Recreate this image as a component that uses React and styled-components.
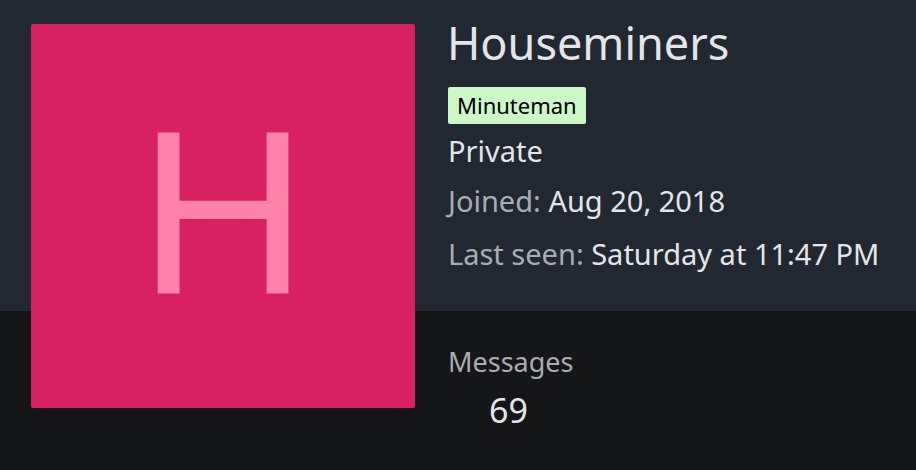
import React from 'react'
import styled, { createGlobalStyle } from 'styled-components'

const GlobalStyle = createGlobalStyle`
  html, body {
    margin: 0;
    padding: 0;
    background: #151618;
  }
  body {
    font-family: "Noto Sans", "Open Sans", sans-serif;
  }
`

const Page = styled.div`
  display: grid;
  grid-template-columns: 448px 1fr;
  grid-template-rows: 311px 159px;
  width: 916px;
  height: 470px;
  background: #151618;
`

const HeaderBand = styled.div`
  grid-row: 1;
  grid-column: 1 / -1;
  background: #222831;
`

const Avatar = styled.div`
  grid-row: 1 / 3;
  grid-column: 1;
  align-self: start;
  z-index: 1;
  margin: 24px 0 0 31px;
  width: 384px;
  height: 384px;
  border-radius: 2px;
  background: #d72161;
  color: #fe82aa;
  display: flex;
  align-items: center;
  justify-content: center;
  font-family: "Liberation Sans", Arial, sans-serif;
  font-size: 234px;
  line-height: 1;
  padding-bottom: 7px;
  box-sizing: border-box;
`

const Header = styled.div`
  grid-row: 1;
  grid-column: 2;
  z-index: 1;
  display: flex;
  flex-direction: column;
  align-items: flex-start;
  padding-top: 15px;
`

const Name = styled.h1`
  margin: 0 0 0 -1px;
  font-size: 45px;
  font-weight: 400;
  line-height: 56px;
  color: #e3e5e8;
`

const Badge = styled.span`
  margin-top: 16px;
  padding: 0 9px;
  font-size: 22px;
  line-height: 37px;
  color: #000;
  background: #ccf7c7;
  border-radius: 2px;
`

const Line = styled.div`
  margin-top: ${p => p.$gap}px;
  font-size: 29px;
  line-height: 36px;
  color: ${p => (p.$light ? '#e3e5e8' : '#a9adb3')};
`

const Value = styled.span`
  color: #e3e5e8;
`

const Stats = styled.div`
  grid-row: 2;
  grid-column: 2;
  padding-top: 34px;
`

const StatLabel = styled.div`
  font-size: 27px;
  line-height: 34px;
  color: #a9adb3;
`

const StatValue = styled.div`
  margin-top: 11px;
  padding-left: 41px;
  font-size: 34px;
  line-height: 40px;
  color: #e3e5e8;
`

export default function App() {
  return (
    <>
      <GlobalStyle />
      <Page>
        <HeaderBand />
        <Avatar>H</Avatar>
        <Header>
          <Name>Houseminers</Name>
          <Badge>Minuteman</Badge>
          <Line $light $gap={9}>Private</Line>
          <Line $gap={14}>
            Joined: <Value>Aug 20, 2018</Value>
          </Line>
          <Line $gap={17}>
            Last seen: <Value>Saturday at 11:47 PM</Value>
          </Line>
        </Header>
        <Stats>
          <StatLabel>Messages</StatLabel>
          <StatValue>69</StatValue>
        </Stats>
      </Page>
    </>
  )
}
